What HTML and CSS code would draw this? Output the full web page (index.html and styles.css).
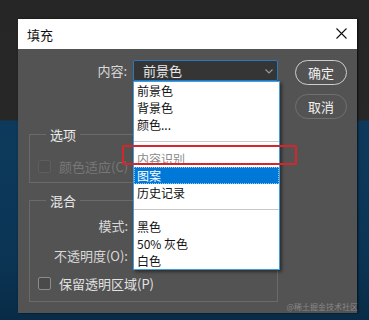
FILE: index.html
```html
<!DOCTYPE html>
<html lang="zh-CN">
<head>
<meta charset="utf-8">
<title>填充</title>
<link rel="stylesheet" href="styles.css">
</head>
<body>
<div class="dialog">
  <div class="titlebar">
    <span class="title">填充</span>
    <svg class="close" width="11" height="11" viewBox="0 0 11 11"><path d="M0.5 0.5 L10.5 10.5 M10.5 0.5 L0.5 10.5" stroke="#111" stroke-width="1.1" fill="none"/></svg>
  </div>
  <div class="panel">
    <div class="main">
      <div class="content-row">
        <span class="label">内容:</span>
        <div class="select-wrap">
          <div class="select">
            <span>前景色</span>
            <svg class="chev" width="8" height="5" viewBox="0 0 8 5"><path d="M0.5 0.5 L4 4 L7.5 0.5" stroke="#9a9a9a" stroke-width="1.1" fill="none"/></svg>
          </div>
          <ul class="dropdown">
            <li>前景色</li>
            <li>背景色</li>
            <li>颜色...</li>
            <li class="sep"></li>
            <li class="disabled">内容识别</li>
            <li class="active">图案</li>
            <li>历史记录</li>
            <li class="sep"></li>
            <li>黑色</li>
            <li>50% 灰色</li>
            <li>白色</li>
          </ul>
        </div>
      </div>
      <fieldset class="group options">
        <legend>选项</legend>
        <div class="check disabled"><span class="box"></span><span>颜色适应(C)</span></div>
      </fieldset>
      <fieldset class="group blend">
        <legend>混合</legend>
        <div class="row"><span class="flabel">模式:</span></div>
        <div class="row second"><span class="flabel">不透明度(O):</span></div>
        <div class="check third"><span class="box"></span><span>保留透明区域(P)</span></div>
      </fieldset>
    </div>
    <div class="buttons">
      <button class="btn primary">确定</button>
      <button class="btn">取消</button>
    </div>
    <div class="annotation"></div>
    <div class="watermark">@稀土掘金技术社区</div>
  </div>
</div>
</body>
</html>
```
FILE: styles.css
```css
* { box-sizing: border-box; }
html, body { margin: 0; padding: 0; }
body {
  width: 369px;
  height: 320px;
  overflow: hidden;
  padding: 19px 0 0 18px;
  font-family: "Noto Sans CJK SC", "Noto Sans", sans-serif;
  background:
    linear-gradient(to bottom, #262626 0, #272727 120px, #0d3a5c 121px, #0b3454 260px, #082c47 100%);
}
.dialog {
  width: 339px;
  height: 294px;
  box-shadow: 1px 0 2px rgba(0,0,0,0.7);
}
.titlebar {
  height: 30px;
  background: #ffffff;
  display: flex;
  align-items: center;
  justify-content: space-between;
  padding: 0 10px 0 9px;
}
.title {
  font-size: 13px;
  color: #111;
  line-height: 17px;
}
.close { display: block; margin-top: -1px; }
.panel {
  position: relative;
  height: 264px;
  background: #535353;
  display: flex;
  padding: 11px 10px 0 11px;
}
.main { width: 249px; }
.content-row {
  display: flex;
  align-items: center;
  height: 21px;
  margin-left: -11px;
}
.label {
  width: 109px;
  text-align: right;
  font-size: 13px;
  color: #d8d8d8;
  line-height: 17px;
  margin-right: 6px;
}
.select-wrap {
  position: relative;
  width: 145px;
  height: 21px;
}
.select {
  height: 21px;
  border: 1px solid #2a78c0;
  border-radius: 2px;
  background: #353535;
  display: flex;
  align-items: center;
  justify-content: space-between;
  padding: 0 4px 0 9px;
  font-size: 13px;
  color: #e8e8e8;
  line-height: 17px;
}
.chev { display: block; margin-top: 1px; }
.dropdown {
  position: absolute;
  top: 21px;
  left: 0;
  width: 147px;
  margin: 0;
  padding: 0;
  list-style: none;
  background: #ffffff;
  border: 1px solid #3d9ee2;
  box-shadow: 2px 2px 3px rgba(0,0,0,0.45);
  z-index: 2;
}
.dropdown li {
  height: 17px;
  line-height: 17px;
  font-size: 12px;
  color: #111;
  padding-left: 3px;
}
.dropdown li.sep {
  display: flex;
  align-items: center;
  padding: 0;
}
.dropdown li.sep::after {
  content: "";
  display: block;
  width: 100%;
  height: 1px;
  background: #c8c8c8;
}
.dropdown li.disabled { color: #8a8a8a; }
.dropdown li.active {
  background: #0078d7;
  color: #ffffff;
  outline: 1px dotted #9cc8ee;
  outline-offset: -1px;
}
.group {
  margin: 0;
  padding: 0;
  border: 1px solid #6a6a6a;
  min-width: 0;
}
.group legend {
  margin-left: 16px;
  padding: 0 4px;
  font-size: 13px;
  line-height: 17px;
  color: #ececec;
}
.options {
  margin-top: 45px;
  padding: 15px 0 7px 0;
}
.blend {
  margin-top: 9px;
  padding: 8px 0 9px 0;
}
.row {
  height: 17px;
  display: flex;
  align-items: center;
}
.row.second { margin-top: 13px; }
.flabel {
  width: 98px;
  text-align: right;
  font-size: 13px;
  line-height: 17px;
  color: #d8d8d8;
}
.check {
  height: 17px;
  display: flex;
  align-items: center;
  gap: 8px;
  padding-left: 8px;
  font-size: 13px;
  line-height: 17px;
  color: #e2e2e2;
}
.check.third { margin-top: 11px; }
.box {
  width: 13px;
  height: 13px;
  border: 1px solid #8c8c8c;
  border-radius: 2px;
  background: #4a4a4a;
}
.check.disabled { color: #777777; }
.check.disabled .box {
  border-color: #5e5e5e;
  background: #505050;
}
.buttons {
  margin-left: 17px;
  display: flex;
  flex-direction: column;
  gap: 9px;
}
.btn {
  width: 52px;
  height: 25px;
  border-radius: 13px;
  border: 1.5px solid #707070;
  background: #535353;
  color: #f0f0f0;
  font-family: inherit;
  font-size: 13px;
  line-height: 17px;
  padding: 0;
}
.btn.primary { border-color: #cdcdcd; }
.annotation {
  position: absolute;
  left: 104px;
  top: 96px;
  width: 175px;
  height: 20px;
  border: 2px solid #d3272c;
  border-radius: 2px;
  z-index: 3;
}
.watermark {
  position: absolute;
  right: -1px;
  bottom: 1px;
  font-size: 8px;
  line-height: 10px;
  color: rgba(190,190,190,0.5);
  z-index: 3;
}
```
